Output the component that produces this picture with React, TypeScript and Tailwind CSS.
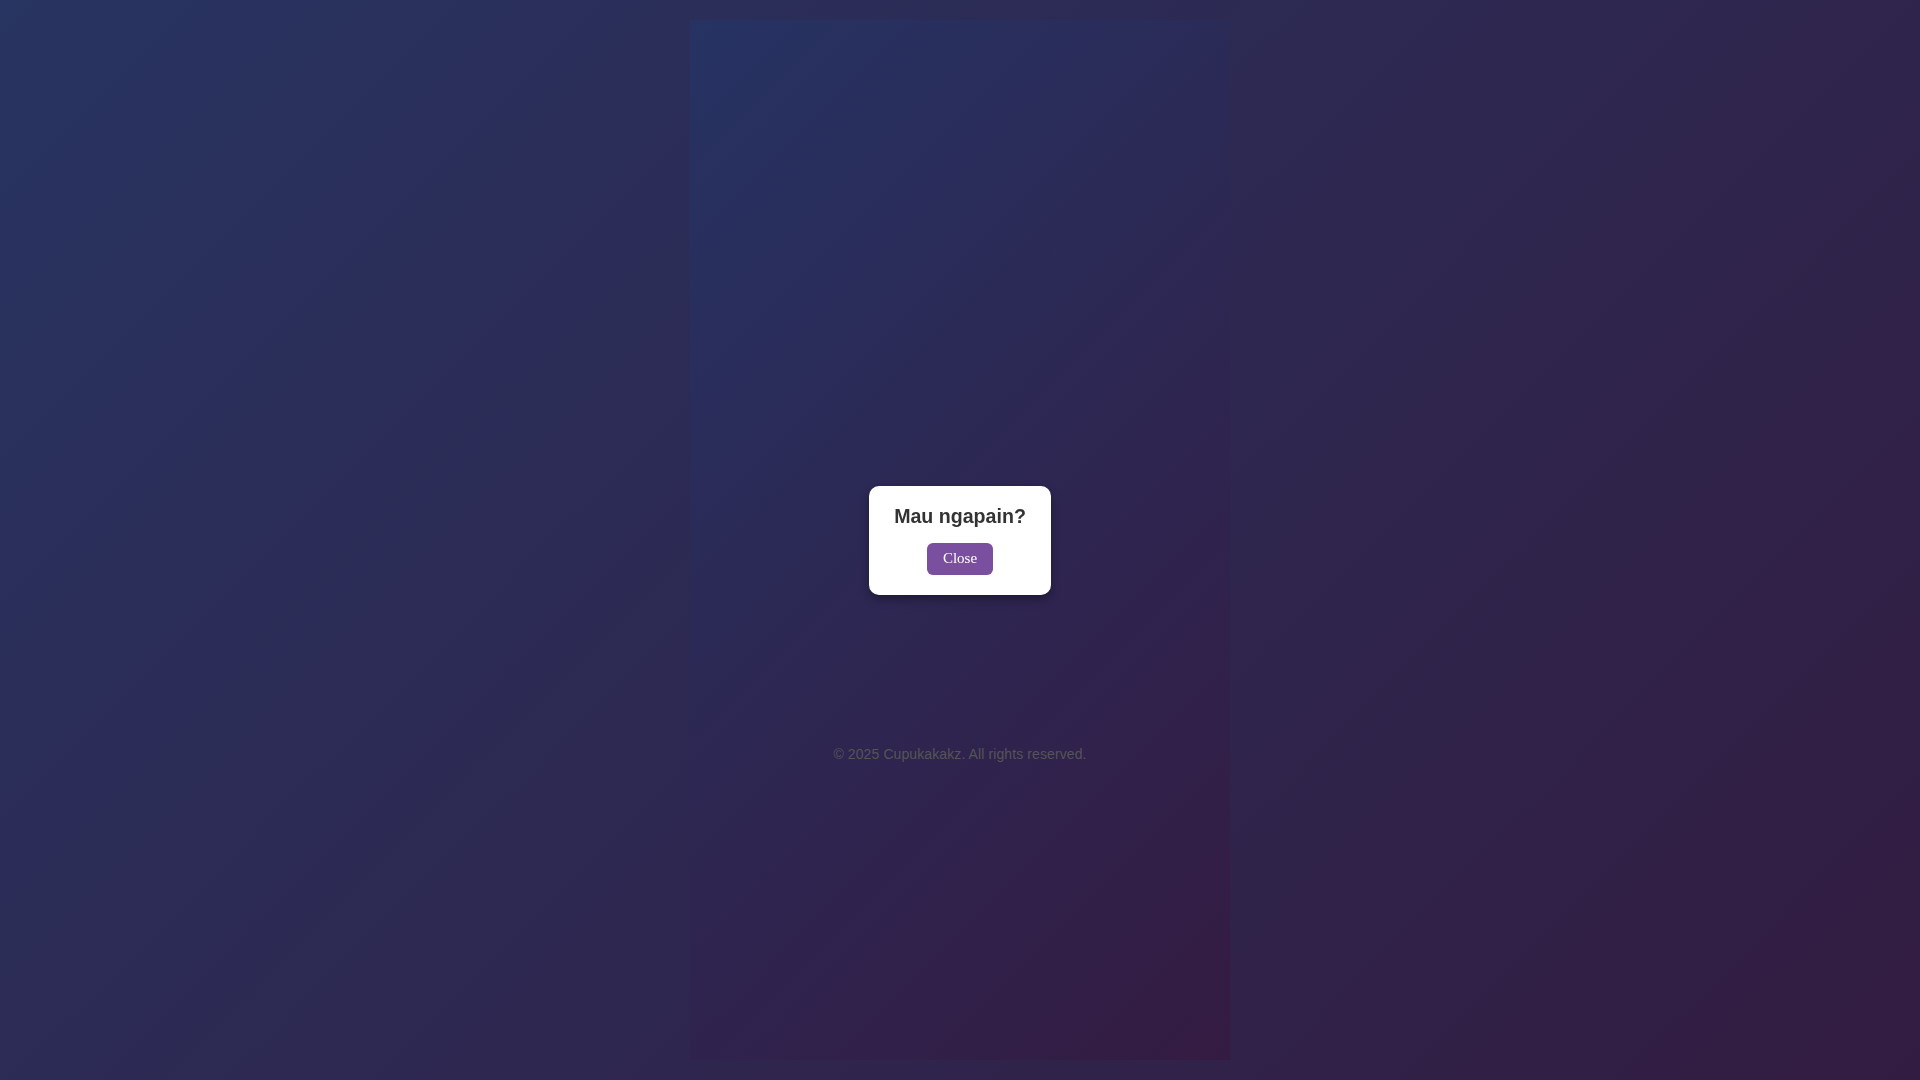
export default function App() {
  return (
    <div
      className="min-h-screen w-full flex justify-center py-[20px] bg-[linear-gradient(135deg,#283461_0%,#331c41_100%)]"
      style={{ fontFamily: '"Liberation Sans", Arial, sans-serif' }}
    >
      <div className="w-[540px] min-h-[1040px] flex flex-col items-center bg-[linear-gradient(135deg,#263363_0%,#341b42_100%)]">
        <div className="h-[726px]" />
        <p className="text-[14px] leading-[16px] tracking-[0.1px] text-[#555]">
          © 2025 Cupukakakz. All rights reserved.
        </p>
      </div>

      {/* popup */}
      <div className="fixed inset-0 flex items-center justify-center">
        <div className="bg-white rounded-[10px] px-[25px] pt-[19px] pb-[20px] flex flex-col items-center shadow-[0_4px_10px_rgba(0,0,0,0.35)]">
          <h3 className="text-[19.6px] leading-[22px] font-bold text-[#333]">
            Mau ngapain?
          </h3>
          <button
            className="mt-[16px] h-[32px] px-[16px] rounded-[6px] bg-[#7b4fa0] text-white text-[15px]"
            style={{ fontFamily: '"Liberation Serif", "Times New Roman", serif' }}
          >
            Close
          </button>
        </div>
      </div>
    </div>
  );
}
